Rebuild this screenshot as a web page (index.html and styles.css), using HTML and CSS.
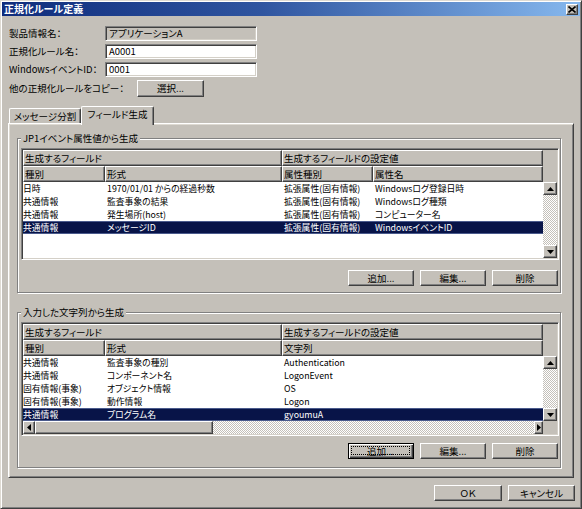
FILE: index.html
```html
<!DOCTYPE html>
<html lang="ja">
<head>
<meta charset="utf-8">
<title>正規化ルール定義</title>
<link rel="stylesheet" href="styles.css">
</head>
<body>
<div class="window">
  <div class="titlebar">
    <span class="title">正規化ルール定義</span>
    <span class="close"><svg width="8" height="7" viewBox="0 0 8 7"><path d="M0.5 0.5L7.5 6.5M7.5 0.5L0.5 6.5" stroke="#000" stroke-width="1.6"/></svg></span>
  </div>

  <div class="form">
    <span class="lbl">製品情報名：</span><div class="field readonly">アプリケーションA</div>
    <span class="lbl">正規化ルール名：</span><div class="field">A0001</div>
    <span class="lbl">WindowsイベントID：</span><div class="field">0001</div>
  </div>
  <div class="copyrow"><span class="lbl">他の正規化ルールをコピー：</span><button class="btn select">選択...</button></div>

  <div class="tabs"><div class="tab">メッセージ分割</div><div class="tab active">フィールド生成</div></div>
  <div class="panel">
    <fieldset class="group g1">
      <legend>JP1イベント属性値から生成</legend>
      <div class="table t1">
        <div class="hdr">
          <div class="hrow"><div class="hc w12">生成するフィールド</div><div class="hc w34">生成するフィールドの設定値</div></div>
          <div class="hrow"><div class="hc w1">種別</div><div class="hc w2">形式</div><div class="hc w3">属性種別</div><div class="hc w4">属性名</div></div>
        </div>
        <div class="spacer"></div>
        <div class="tbody">
          <div class="row"><span class="cell w1">日時</span><span class="cell w2">1970/01/01 からの経過秒数</span><span class="cell w3">拡張属性(固有情報)</span><span class="cell w4">Windowsログ登録日時</span></div>
          <div class="row"><span class="cell w1">共通情報</span><span class="cell w2">監査事象の結果</span><span class="cell w3">拡張属性(固有情報)</span><span class="cell w4">Windowsログ種類</span></div>
          <div class="row"><span class="cell w1">共通情報</span><span class="cell w2">発生場所(host)</span><span class="cell w3">拡張属性(固有情報)</span><span class="cell w4">コンピューター名</span></div>
          <div class="row sel"><span class="cell w1">共通情報</span><span class="cell w2">メッセージID</span><span class="cell w3">拡張属性(固有情報)</span><span class="cell w4">WindowsイベントID</span></div>
        </div>
        <div class="vscroll">
          <div class="arrow"><svg width="7" height="4" viewBox="0 0 7 4"><path d="M3.5 0L7 4H0Z"/></svg></div>
          <div class="track"></div>
          <div class="arrow"><svg width="7" height="4" viewBox="0 0 7 4"><path d="M0 0H7L3.5 4Z"/></svg></div>
        </div>
      </div>
      <div class="btnrow">
        <button class="btn act">追加...</button><button class="btn act">編集...</button><button class="btn act">削除</button>
      </div>
    </fieldset>

    <fieldset class="group g2">
      <legend>入力した文字列から生成</legend>
      <div class="table t2">
        <div class="hdr">
          <div class="hrow"><div class="hc w12">生成するフィールド</div><div class="hc w34">生成するフィールドの設定値</div></div>
          <div class="hrow"><div class="hc w1">種別</div><div class="hc w2">形式</div><div class="hc w34">文字列</div></div>
        </div>
        <div class="spacer"></div>
        <div class="tbody">
          <div class="row"><span class="cell w1">共通情報</span><span class="cell w2">監査事象の種別</span><span class="cell w34">Authentication</span></div>
          <div class="row"><span class="cell w1">共通情報</span><span class="cell w2">コンポーネント名</span><span class="cell w34">LogonEvent</span></div>
          <div class="row"><span class="cell w1">固有情報(事象)</span><span class="cell w2">オブジェクト情報</span><span class="cell w34">OS</span></div>
          <div class="row"><span class="cell w1">固有情報(事象)</span><span class="cell w2">動作情報</span><span class="cell w34">Logon</span></div>
          <div class="row sel"><span class="cell w1">共通情報</span><span class="cell w2">プログラム名</span><span class="cell w34">gyoumuA</span></div>
        </div>
        <div class="vscroll">
          <div class="arrow"><svg width="7" height="4" viewBox="0 0 7 4"><path d="M3.5 0L7 4H0Z"/></svg></div>
          <div class="track"></div>
          <div class="arrow"><svg width="7" height="4" viewBox="0 0 7 4"><path d="M0 0H7L3.5 4Z"/></svg></div>
        </div>
        <div class="hscroll">
          <div class="harrow left"><svg width="4" height="7" viewBox="0 0 4 7"><path d="M0 3.5L4 0V7Z"/></svg></div>
          <div class="thumb"></div>
          <div class="track"></div>
          <div class="harrow right"><svg width="4" height="7" viewBox="0 0 4 7"><path d="M4 3.5L0 0V7Z"/></svg></div>
        </div>
        <div class="corner"></div>
      </div>
      <div class="btnrow">
        <button class="btn act def"><span class="focus">追加...</span></button><button class="btn act">編集...</button><button class="btn act">削除</button>
      </div>
    </fieldset>
  </div>

  <div class="footer">
    <button class="btn ok">ＯＫ</button><button class="btn cancel">キャンセル</button>
  </div>
</div>
</body>
</html>
```

FILE: styles.css
```css
* { box-sizing: border-box; }
html, body { margin: 0; padding: 0; }
body {
  width: 582px;
  height: 509px;
  overflow: hidden;
  font-family: "Liberation Sans Narrow", "Noto Sans CJK JP", sans-serif;
  font-size: 9.5px;
  color: #000;
  font-feature-settings: "palt";
}

.window {
  width: 582px;
  height: 509px;
  background: #c4c0b9;
  border: 1px solid;
  border-color: #dedad2 #404040 #404040 #dedad2;
  box-shadow: inset 1px 1px #fff, inset -1px -1px #808080;
  padding: 1px;
  display: flex;
  flex-direction: column;
}

.titlebar {
  height: 14px;
  flex: none;
  display: flex;
  align-items: center;
  justify-content: space-between;
  padding: 0 2px 0 2px;
  background: linear-gradient(90deg, #0f2c7c 0%, #2f55a0 45%, #86b8ee 100%);
}
.title {
  color: #fff;
  font-weight: bold;
  font-size: 10px;
  line-height: 14px;
}
.close {
  width: 12px;
  height: 11px;
  background: #c4c0b9;
  border: 1px solid;
  border-color: #fff #404040 #404040 #fff;
  box-shadow: inset -1px -1px #808080;
  display: flex;
  align-items: center;
  justify-content: center;
}
.close svg { display: block; }

.form {
  margin: 10px 0 0 7px;
  display: grid;
  grid-template-columns: 96px 152px;
  row-gap: 3px;
  align-items: center;
}
.lbl { line-height: 15px; white-space: nowrap; }
.field {
  height: 15px;
  background: #fff;
  border: 1px solid;
  border-color: #808080 #fff #fff #808080;
  box-shadow: inset 1px 1px #404040, inset -1px -1px #d4d0c8;
  padding-left: 3px;
  line-height: 13px;
}
.field.readonly { background: #c4c0b9; }

.copyrow {
  margin: 3px 0 0 7px;
  display: flex;
  align-items: center;
  height: 16px;
}
.copyrow .lbl { width: 128px; }

.btn {
  font: inherit;
  margin: 0;
  padding: 0;
  height: 16px;
  background: #c4c0b9;
  color: #000;
  border: 1px solid;
  border-color: #fff #404040 #404040 #fff;
  box-shadow: inset -1px -1px #808080;
  display: flex;
  align-items: center;
  justify-content: center;
  line-height: 12px;
}
.btn.select { width: 67px; height: 17px; }
.btn.act { width: 66px; }
.btn.def {
  border: 1px solid #000;
  box-shadow: inset 1px 1px #fff, inset -1px -1px #404040, inset -2px -2px #808080;
  padding: 2px 3px 3px 2px;
}
.btn.def .focus {
  flex: 1;
  align-self: stretch;
  border: 1px dotted #000;
  display: flex;
  align-items: center;
  justify-content: center;
}

.tabs {
  margin: 10px 0 0 7px;
  height: 17px;
  display: flex;
  align-items: flex-end;
  flex: none;
}
.tab {
  width: 72px;
  height: 15px;
  border: 1px solid;
  border-bottom: none;
  border-color: #fff #404040 #404040 #fff;
  box-shadow: inset -1px 0 #808080;
  border-radius: 2px 2px 0 0;
  display: flex;
  align-items: center;
  justify-content: center;
  line-height: 13px;
  white-space: nowrap;
}
.tab.active {
  position: relative;
  z-index: 1;
  width: 73px;
  height: 19px;
  margin-bottom: -2px;
  background: #c4c0b9;
  padding-bottom: 3px;
}

.panel {
  margin: 0 6px;
  border: 1px solid;
  border-color: #fff #404040 #404040 #fff;
  box-shadow: inset 1px 1px #dedad2, inset -1px -1px #808080;
  padding: 8px 9px 9px 8px;
  flex: none;
}

.group {
  margin: 0;
  padding: 4px 1px 6px 3px;
  border: 1px solid #808080;
  box-shadow: inset 1px 1px #fff, 1px 1px #fff;
  min-width: 0;
  width: 544px;
}
.group legend {
  padding: 0 2px;
  line-height: 12px;
  background: #c4c0b9;
  white-space: nowrap;
}
.group.g2 { margin-top: 13px; padding-bottom: 8px; }

.table {
  width: 538px;
  background: #fff;
  border: 1px solid;
  border-color: #808080 #fff #fff #808080;
  box-shadow: inset 1px 1px #404040, inset -1px -1px #d4d0c8;
  padding: 1px;
  display: grid;
  grid-template-columns: 520px 14px;
}
.t1 { height: 112px; grid-template-rows: 32px 76px; }
.t2 { height: 114px; grid-template-rows: 32px 65px 13px; }

.hdr { background: #c4c0b9; }
.hrow { display: flex; height: 16px; }
.hc {
  height: 16px;
  border: 1px solid;
  border-color: #fff #404040 #404040 #fff;
  box-shadow: inset -1px -1px #808080;
  padding-left: 1px;
  line-height: 14px;
  white-space: nowrap;
  overflow: hidden;
  flex: none;
}
.spacer { background: #c4c0b9; }

.w1 { width: 82px; }
.w2 { width: 177px; }
.w3 { width: 91px; }
.w4 { width: 170px; }
.w12 { width: 259px; }
.w34 { width: 261px; }

.tbody { background: #fff; overflow: hidden; }
.row { display: flex; height: 13px; line-height: 13px; font-size: 8.8px; }
.cell {
  flex: none;
  padding-left: 2px;
  white-space: nowrap;
  overflow: hidden;
}
.cell.w1 { padding-left: 0; }
.row.sel {
  background: #081448;
  color: #fff;
  box-shadow: inset 0 1px #4a5a8c, inset 0 -1px #4a5a8c;
}

.vscroll { display: flex; flex-direction: column; }
.arrow {
  height: 13px;
  flex: none;
  background: #c4c0b9;
  border: 1px solid;
  border-color: #fff #404040 #404040 #fff;
  box-shadow: inset -1px -1px #808080;
  display: flex;
  align-items: center;
  justify-content: center;
}
.arrow svg, .harrow svg { display: block; }
.track {
  flex: 1;
  background-color: #fff;
  background-image: repeating-conic-gradient(#fff 0% 25%, #c4c0b9 0% 50%);
  background-size: 2px 2px;
}

.hscroll { display: flex; }
.harrow {
  flex: none;
  background: #c4c0b9;
  border: 1px solid;
  border-color: #fff #404040 #404040 #fff;
  box-shadow: inset -1px -1px #808080;
  display: flex;
  align-items: center;
  justify-content: center;
}
.harrow.left { width: 12px; }
.harrow.right { width: 9px; }
.thumb {
  flex: none;
  width: 178px;
  background: #c4c0b9;
  border: 1px solid;
  border-color: #fff #404040 #404040 #fff;
  box-shadow: inset -1px -1px #808080;
}
.corner { background: #c4c0b9; }

.btnrow {
  margin-top: 10px;
  display: flex;
  justify-content: flex-end;
  gap: 6px;
  padding-right: 1px;
}
.g2 .btnrow { margin-top: 7px; }

.footer {
  margin-top: 7px;
  display: flex;
  justify-content: flex-end;
  gap: 6px;
  padding-right: 5px;
}
.btn.ok { width: 68px; }
.btn.cancel { width: 67px; }
```
